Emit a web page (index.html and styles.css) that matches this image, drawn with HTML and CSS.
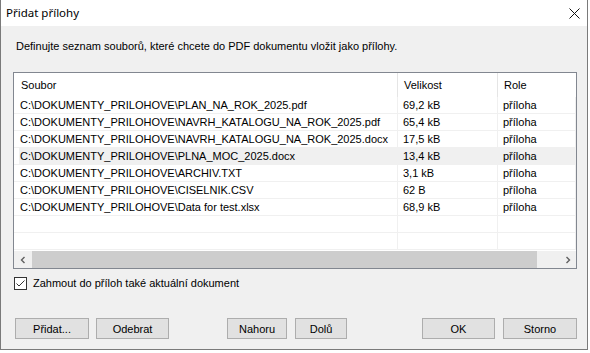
FILE: index.html
```html
<!DOCTYPE html>
<html lang="cs">
<head>
    <meta charset="UTF-8">
    <title>Přidat přílohy</title>
    <link rel="stylesheet" href="styles.css">
</head>
<body>
    <div class="window">
        <div class="titlebar">
            <span class="title">Přidat přílohy</span>
            <svg class="close" width="11" height="11" viewBox="0 0 11 11">
                <path d="M0.5 0.5 L10.5 10.5 M10.5 0.5 L0.5 10.5" stroke="#111" stroke-width="1" fill="none"/>
            </svg>
        </div>
        <div class="content">
            <p class="intro">Definujte seznam souborů, které chcete do PDF dokumentu vložit jako přílohy.</p>

            <div class="list">
                <div class="list-body">
                    <table class="files">
                        <colgroup>
                            <col class="c-file">
                            <col class="c-size">
                            <col class="c-role">
                        </colgroup>
                        <thead>
                            <tr><th>Soubor</th><th>Velikost</th><th>Role</th></tr>
                        </thead>
                        <tbody>
                            <tr><td>C:\DOKUMENTY_PRILOHOVE\PLAN_NA_ROK_2025.pdf</td><td>69,2 kB</td><td>příloha</td></tr>
                            <tr><td>C:\DOKUMENTY_PRILOHOVE\NAVRH_KATALOGU_NA_ROK_2025.pdf</td><td>65,4 kB</td><td>příloha</td></tr>
                            <tr><td>C:\DOKUMENTY_PRILOHOVE\NAVRH_KATALOGU_NA_ROK_2025.docx</td><td>17,5 kB</td><td>příloha</td></tr>
                            <tr class="hot"><td>C:\DOKUMENTY_PRILOHOVE\PLNA_MOC_2025.docx</td><td>13,4 kB</td><td>příloha</td></tr>
                            <tr><td>C:\DOKUMENTY_PRILOHOVE\ARCHIV.TXT</td><td>3,1 kB</td><td>příloha</td></tr>
                            <tr><td>C:\DOKUMENTY_PRILOHOVE\CISELNIK.CSV</td><td>62 B</td><td>příloha</td></tr>
                            <tr><td>C:\DOKUMENTY_PRILOHOVE\Data for test.xlsx</td><td>68,9 kB</td><td>příloha</td></tr>
                            <tr><td></td><td></td><td></td></tr>
                            <tr><td></td><td></td><td></td></tr>
                        </tbody>
                    </table>
                </div>
                <div class="hscroll">
                    <div class="arrow">
                        <svg width="8" height="8" viewBox="0 0 8 8"><path d="M5.5 1 L2.5 4 L5.5 7" stroke="#606060" stroke-width="1.4" fill="none"/></svg>
                    </div>
                    <div class="track"><div class="thumb"></div></div>
                    <div class="arrow">
                        <svg width="8" height="8" viewBox="0 0 8 8"><path d="M2.5 1 L5.5 4 L2.5 7" stroke="#606060" stroke-width="1.4" fill="none"/></svg>
                    </div>
                </div>
            </div>

            <label class="check">
                <span class="box">
                    <svg width="11" height="11" viewBox="0 0 11 11"><path d="M1.5 5.5 L4 8 L9.5 2.5" stroke="#333" stroke-width="1" fill="none"/></svg>
                </span>
                Zahmout do příloh také aktuální dokument
            </label>

            <div class="buttons">
                <button class="btn w-add">Přidat...</button>
                <button class="btn w-remove">Odebrat</button>
                <button class="btn w-up">Nahoru</button>
                <button class="btn w-down">Dolů</button>
                <span class="spacer"></span>
                <button class="btn w-ok">OK</button>
                <button class="btn w-cancel">Storno</button>
            </div>
        </div>
    </div>
</body>
</html>
```

FILE: styles.css
```css
body {
    margin: 0;
    background: #fff;
    font-family: "Liberation Sans", Arial, sans-serif;
    font-size: 11px;
    color: #000;
}
.window {
    width: 586px;
    height: 349px;
    border: 1px solid #7a7a7a;
    border-top: none;
    background: #f0f0f0;
    display: flex;
    flex-direction: column;
}
.titlebar {
    height: 26px;
    background: #fff;
    display: flex;
    align-items: center;
    justify-content: space-between;
    padding: 0 7px 0 5px;
}
.title {
    font-family: "Noto Sans", "Open Sans", sans-serif;
    font-size: 11.5px;
    margin-top: -1px;
}
.content {
    flex: 1;
    display: flex;
    flex-direction: column;
    padding: 0 10px 0 12px;
}
.intro {
    margin: 14px 0 0 3px;
    line-height: 13px;
}
.list {
    margin-top: 19px;
    height: 195px;
    border: 1px solid #828790;
    background: #fff;
    display: flex;
    flex-direction: column;
}
.list-body {
    flex: 1;
    overflow: hidden;
}
.files {
    border-collapse: separate;
    border-spacing: 0;
    table-layout: fixed;
    width: 562px;
}
.c-file { width: 384px; }
.c-size { width: 100px; }
.c-role { width: 78px; }
.files th {
    height: 24px;
    padding: 0 0 0 6px;
    text-align: left;
    font-weight: normal;
    border-right: 1px solid #e5e5e5;
    white-space: nowrap;
}
.files th:first-child {
    padding-left: 7px;
}
.files th:last-child {
    border-right: none;
}
.files td {
    box-sizing: border-box;
    height: 17px;
    padding: 1px 0 0 5px;
    line-height: 15px;
    border-right: 1px solid #f0f0f0;
    border-bottom: 1px solid #f0f0f0;
    white-space: nowrap;
    overflow: hidden;
}
.files td:first-child {
    padding-left: 6px;
}
.files tr.hot td {
    background: #f0f0f0;
}
.files tr.hot td:first-child {
    background: linear-gradient(to right, #fff 5px, #f0f0f0 5px);
}
.hscroll {
    height: 17px;
    display: flex;
    background: #f0f0f0;
}
.arrow {
    width: 17px;
    display: flex;
    align-items: center;
    justify-content: center;
}
.track {
    flex: 1;
    padding: 0 22px 0 1px;
}
.thumb {
    height: 100%;
    background: #cdcdcd;
}
.check {
    display: flex;
    align-items: center;
    margin: 7px 0 0 1px;
    height: 14px;
}
.box {
    width: 11px;
    height: 11px;
    border: 1px solid #333;
    background: #fff;
    margin-right: 6px;
    display: flex;
}
.buttons {
    display: flex;
    margin: 28px 0 0 2px;
}
.btn {
    height: 21px;
    padding: 0;
    background: #e1e1e1;
    border: 1px solid #adadad;
    font-family: "Liberation Sans", Arial, sans-serif;
    font-size: 11px;
    color: #000;
}
.w-add { width: 74px; margin-right: 7px; }
.w-remove { width: 73px; margin-right: 58px; }
.w-up { width: 60px; margin-right: 8px; }
.w-down { width: 52px; }
.spacer { flex: 1; }
.w-ok { width: 73px; margin-right: 8px; }
.w-cancel { width: 74px; }
```
